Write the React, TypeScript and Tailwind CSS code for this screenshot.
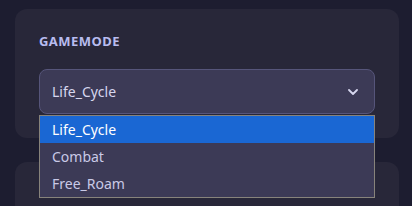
import { useState } from 'react';

const modes = ['Life_Cycle', 'Combat', 'Free_Roam'];

export default function App() {
  const [selected] = useState('Life_Cycle');

  return (
    <div
      className="h-[206px] w-[412px] overflow-hidden bg-[#1d1d30] pt-[9px]"
      style={{ fontFamily: '"Noto Sans", "Open Sans", sans-serif' }}
    >
      <div className="ml-[15px] mr-[13px] rounded-[12px] bg-[#282739] px-6 pt-[22px] pb-[24px]">
        <div className="text-[13px] font-bold leading-[20px] tracking-[0.45px] text-[#b8bcef]">GAMEMODE</div>
        <div className="relative mt-[18px]">
          <div className="flex h-[45px] items-center justify-between rounded-[8px] border border-[#56557a] bg-[#3c3a56] pl-3 pr-4">
            <span className="text-[14px] text-[#d6d6ee]">{selected}</span>
            <svg width="10" height="6" viewBox="0 0 10 6" fill="none" className="text-[#d6d6ee]">
              <path d="M1 1l4 4 4-4" stroke="currentColor" strokeWidth="1.8" strokeLinecap="round" strokeLinejoin="round" />
            </svg>
          </div>
          <div className="absolute left-0 right-0 top-[46px] z-10 border border-[#87837b] bg-[#3c3a56]">
            {modes.map((m) => (
              <div
                key={m}
                className={
                  m === selected
                    ? 'flex h-[27px] items-center bg-[#1a67d3] pl-3 text-[14px] text-white'
                    : 'flex h-[27px] items-center pl-3 text-[14px] text-[#c9c9e6]'
                }
              >
                {m}
              </div>
            ))}
          </div>
        </div>
      </div>
      <div className="ml-[15px] mr-[13px] mt-[24px] h-[80px] rounded-[12px] bg-[#282739]" />
    </div>
  );
}
